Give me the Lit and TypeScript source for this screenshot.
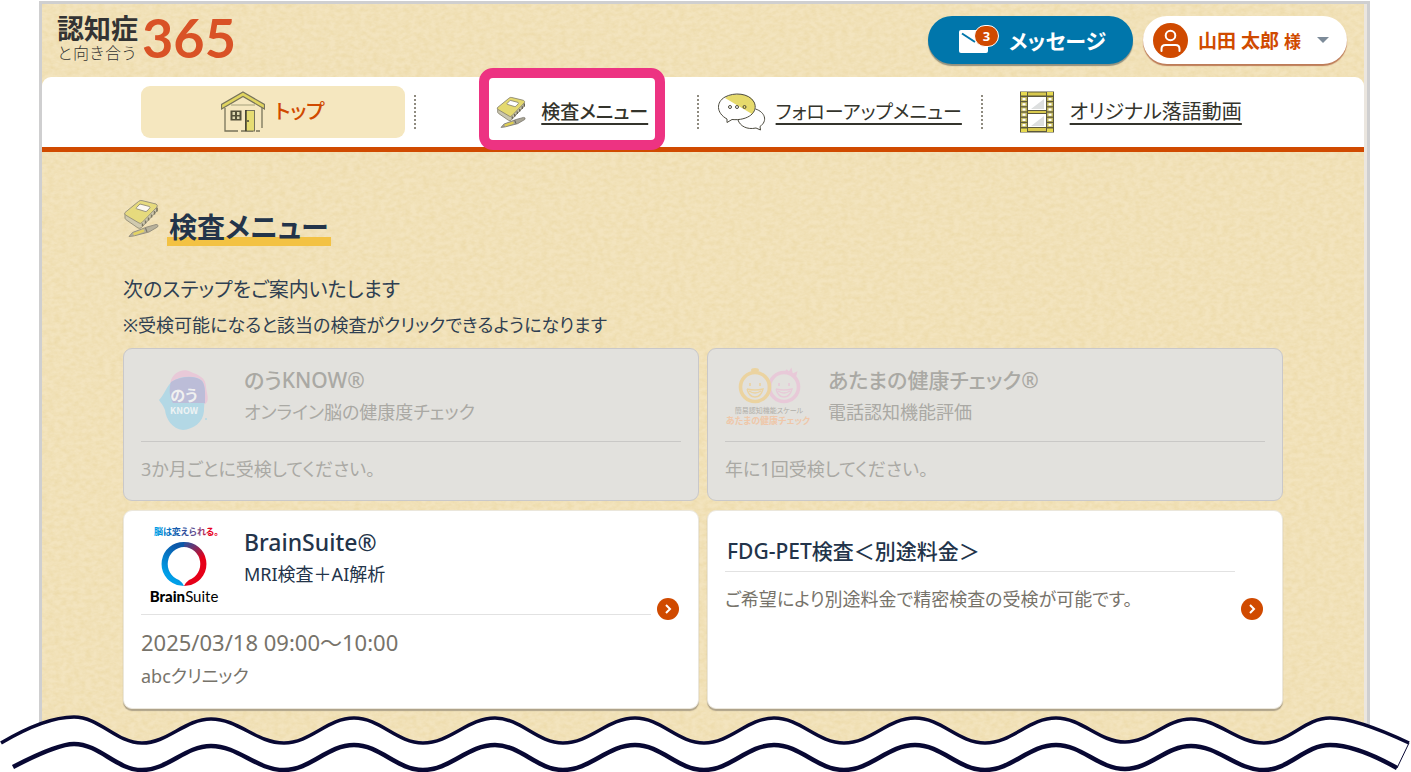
import { LitElement, html, css, svg, nothing, TemplateResult } from "lit";
import { customElement, property } from "lit/decorators.js";

const notebookIcon = html`<svg class="notebook" viewBox="0 0 36 38" aria-hidden="true">
  <path d="M2 14V19Q2 20 3 20.700L15 29Q17 30 18.500 28.500L34 12V8Z" fill="#c9c5ae" stroke="#85816e" stroke-width="1" />
  <path d="M15.500 2.500Q17 1 19 1.600L33 5Q35 6 34 8L19 23.500Q17.500 25 16 24L2.500 16Q1 15 2 13.500Z" fill="#e4d96f" stroke="#85816e" stroke-width="1" />
  <path d="M19.500 24.500V27M22.500 21.500V24.500M25.500 18.500V21.500M28.500 15.500V18.500M31.500 12V15.500M34 9V12.500" stroke="#5f5c4e" stroke-width="1.500" />
  <path d="M17 5 26.500 7.500Q27.500 8 26.800 9L24 12Q23.200 12.800 22 12.400L13.500 9.800Q12.800 9.400 13.500 8.600Z" fill="#fff" stroke="#85816e" stroke-width="1" />
  <path d="M6 37.500 9.500 33.500 24 28 33 25.500Q36 25.500 34.500 28L26 33 10.500 37Z" fill="#a9a595" stroke="#77746a" stroke-width="0.900" />
  <path d="M10.500 35.300 21 31.500" stroke="#e0cf4e" stroke-width="2.600" />
  <path d="M22.500 29 24 33" stroke="#5f5d55" stroke-width="1.100" />
</svg>`;

const houseIcon = html`<svg width="44" height="42" viewBox="0 0 44 42" aria-hidden="true">
  <path d="M4 17V40H17M20 40H32M35 40H39M41 16V37" fill="none" stroke="#77735a" stroke-width="1.300" />
  <path d="M10 14H34" stroke="#a49f7b" stroke-width="1" />
  <path d="M22 1 43.500 13.500V18L22 5.500 0.500 18V13.500Z" fill="#e0d45f" stroke="#77735a" stroke-width="1.200" />
  <rect x="9.500" y="19.500" width="11" height="10" fill="#54513a" />
  <path d="M11.500 21h2.500v3h-2.500zM16 21h2.500v3h-2.500zM11.500 25.500h2.500v2.500h-2.500zM16 25.500h2.500v2.500h-2.500z" fill="#ddd8b0" />
  <rect x="24.500" y="19.500" width="9" height="20.500" fill="#e6dc72" stroke="#77735a" stroke-width="1" />
  <path d="M25 19V40" stroke="#333124" stroke-width="1.300" /><circle cx="27" cy="30" r="1.100" fill="#54513a" />
</svg>`;

const chatIcon = html`<svg width="48" height="38" viewBox="0 0 48 38" aria-hidden="true">
  <path d="M7 5C13 0 28 0 34 6 39 11 37 18 34 21Z" fill="#e6da6c" />
  <path d="M9 26C-2 20-2 9 7 4 16-1 31 0 36 9 41 19 30 28 14 26.500L9 29.500Z" fill="none" stroke="#4c4a3e" stroke-width="1" />
  <path d="M37.500 16C47 19 50 28 42 33.500L42.500 37 38 35C29 37 22 33 20 27" fill="none" stroke="#4c4a3e" stroke-width="1" />
  <g fill="none" stroke="#4c4a3e" stroke-width="1"><circle cx="12" cy="14" r="1.500" /><circle cx="19" cy="14" r="1.500" /><circle cx="26.500" cy="14" r="1.500" /></g>
</svg>`;

const filmIcon = html`<svg width="36" height="42" viewBox="0 0 36 42" aria-hidden="true">
  <rect x="1" y="0.500" width="34" height="41" fill="#5c583d" />
  <path d="M9 1.500H27V4.500H9zM9 37H27V40H9zM9 20H27V22H9z" fill="#d8c94f" />
  <rect x="9" y="6" width="18" height="13" fill="#fff" /><rect x="9" y="23" width="18" height="13" fill="#fff" />
  <path d="M12 18 25 8V18zM12 35 25 25V35z" fill="#dddfdf" />
  <rect x="2" y="1" width="6" height="3.500" fill="#e6d94f" /><rect x="28" y="1" width="6" height="3.500" fill="#e6d94f" />
  <rect x="2" y="37.500" width="6" height="3.500" fill="#e6d94f" /><rect x="28" y="37.500" width="6" height="3.500" fill="#e6d94f" />
  ${[6, 11.2, 16.4, 21.6, 26.8, 32].map(
    (y) => svg`<rect x="2" y=${y} width="6" height="4" fill="#c4b85a" /><rect x="28" y=${y} width="6" height="4" fill="#c4b85a" />
      <rect x="3.5" y=${y + 1} width="3" height="2.200" fill="#fff" /><rect x="29.5" y=${y + 1} width="3" height="2.200" fill="#fff" />`
  )}
</svg>`;

const knowLogo = html`<svg width="86" height="66" viewBox="0 0 86 66" role="img" aria-label="のうKNOW">
  <path d="M30 13C34 4 43 1 50 5 58 8 65 11 65 20 66 28 69 34 64 37H32C28 30 28 20 30 13Z" fill="#e8c9d8" />
  <path d="M32 14C40 9 55 8 61 14 66 20 63 38 63 44 62 56 52 62 42 63 31 62 25 52 24 43 22 38 20 36 18 33 24 27 25 19 32 14Z" fill="#b3d8e5" />
  <path d="M30 15C40 9 55 8 61 14 65 20 64 28 64 36H32C28 30 28 20 30 15Z" fill="#bcbdd8" />
  <text class="lg bold" x="43" y="34" font-size="15" fill="#f0f0f0" text-anchor="middle">のう</text>
  <text class="lg bold" x="43" y="47" font-size="9" fill="#eef3f4" text-anchor="middle">KNOW</text>
  <circle cx="65" cy="52" r="1" fill="#b3d8e5" />
</svg>`;

const face = (x: number, color: string) => svg`<g fill="none" stroke=${color}>
  <circle cx=${x} cy="20" r="14.5" stroke-width="3.600" />
  <path d="M${x - 8} 22Q${x} 24 ${x + 8} 22Q${x + 6} 30 ${x} 30Q${x - 6} 30 ${x - 8} 22M${x - 6} 24Q${x} 28 ${x + 6} 24" stroke-width="1.300" />
  <path d="M${x - 5} 16V19M${x + 5} 16V19" stroke-width="1.600" />
</g>`;

const checkLogo = html`<svg width="86" height="66" viewBox="0 0 86 66" role="img" aria-label="あたまの健康チェック">
  ${face(59, "#e8c9d8")}${face(30, "#ebd3a0")}
  <ellipse cx="30" cy="3" rx="4" ry="2" fill="#ebd3a0" />
  <path d="M61 3l3 3 2-3 1 5 4-2-1 4" stroke="#e8c9d8" stroke-width="2" fill="none" />
  <text class="lg" x="44" y="46" font-size="7" fill="#b0aea8" text-anchor="middle">簡易認知機能スケール</text>
  <text class="lg bold" x="43" y="57" font-size="9" fill="#efc7a9" text-anchor="middle">あたまの健康チェック</text>
</svg>`;

const brainLogo = html`<svg width="86" height="86" viewBox="0 0 86 86" role="img" aria-label="BrainSuite">
  <defs>
    <linearGradient id="tag" x1="0" x2="1"><stop offset="0" stop-color="#00a0e9" /><stop offset="0.400" stop-color="#1a4fa3" /><stop offset="0.700" stop-color="#7a4a85" /><stop offset="0.850" stop-color="#e60020" /></linearGradient>
    <linearGradient id="ringL" x1="0.300" y1="1" x2="0.700" y2="0"><stop offset="0.200" stop-color="#009fe8" /><stop offset="0.900" stop-color="#0b57a8" /></linearGradient>
    <linearGradient id="ringR" x1="0" y1="0" x2="0.400" y2="1"><stop offset="0" stop-color="#1957a8" /><stop offset="0.600" stop-color="#e60018" /></linearGradient>
  </defs>
  <text class="lg bold" x="13" y="12" font-size="9" fill="url(#tag)">脳は変えられる。</text>
  <path d="M43 19A22 22 0 0 0 36 62L43 63Q42 60 38 57A17 17 0 0 1 43 24Z" fill="url(#ringL)" />
  <path d="M43 19A22 22 0 0 1 50 62L43 63Q44 60 48 57A17 17 0 0 0 43 24Z" fill="url(#ringR)" />
  <text class="lato" x="43" y="79" font-size="15" fill="#000" text-anchor="middle"><tspan class="black">Brain</tspan>Suite</text>
</svg>`;

@customElement("test-card")
class TestCard extends LitElement {
  @property() heading = "";
  @property() sub = "";
  @property({ attribute: false }) lines: string[] = [];
  @property({ attribute: false }) logo: TemplateResult | null = null;
  @property({ type: Boolean }) active = false;

  static styles = css`
    :host { display: grid; }
    .card { box-sizing: border-box; display: flex; align-items: center; gap: 6px; padding: 18px 17px 13px; border: 1px solid #c9c8ca; border-radius: 9px; background: #e2e1dd; color: #aaa9a4; text-decoration: none; }
    .card.active { padding: 12px 19px 13px 17px; border-color: #ebe7dc; background: #fff; color: #23344a; box-shadow: 0 2px 1px #afa38a; }
    .content { flex: 1; align-self: stretch; min-width: 0; display: flex; flex-direction: column; }
    .head { display: flex; gap: 17px; min-height: 74px; border-bottom: 1px solid #c9c8c6; }
    .active .head { min-height: 91px; border-color: #e2e2e2; }
    .active .head.plain { min-height: 48px; }
    .head svg { flex: none; }
    h2 { margin: 0; font-size: 21px; line-height: 26px; font-weight: 500; }
    .active h2 { font-size: 23px; line-height: 38px; }
    .active .plain h2 { font-size: 21px; line-height: 56px; padding: 0 2px; }
    .active .head.plain { height: 48px; }
    .sub { margin: 0; font-size: 18px; line-height: 38px; }
    .active .sub { line-height: 26px; }
    .body { padding-top: 10px; font-size: 18px; line-height: 35px; }
    .active .body { color: #77736a; }
    .body p { margin: 0; }
    .body p.date { font-size: 22px; line-height: 34px; }
    .arrow { flex: none; width: 22px; height: 22px; }
    .lg { font-family: "Noto Sans CJK JP", sans-serif; }
    .bold { font-weight: 700; }
    .lato { font-family: Lato, sans-serif; }
    .black { font-weight: 900; }
  `;

  render() {
    const content = html`<div class="content">
      <div class="head ${this.logo ? "" : "plain"}">
        ${this.logo ?? nothing}
        <div><h2>${this.heading}</h2>${this.sub ? html`<p class="sub">${this.sub}</p>` : nothing}</div>
      </div>
      <div class="body">${this.lines.map((l) => html`<p class=${/^\d{4}\//.test(l) ? "date" : ""}>${l}</p>`)}</div>
    </div>`;
    return this.active
      ? html`<a class="card active" href="#">${content}
          <svg class="arrow" viewBox="0 0 22 22" aria-hidden="true"><circle cx="11" cy="11" r="11" fill="#d04a00" /><path d="M9 7 13 11 9 15" fill="none" stroke="#fff" stroke-width="2" /></svg>
        </a>`
      : html`<article class="card" aria-disabled="true">${content}</article>`;
  }
}

/* Crest and trough positions of the torn edge. */
const crests: [number, number][] = [
  [74, 4], [142, 30], [211, 6], [284, 30], [354, 5], [423, 30], [495, 5], [563, 30], [635, 5], [704, 30],
  [774, 5], [844, 30], [915, 5], [985, 30], [1056, 5], [1125, 29], [1191, 6], [1264, 30], [1330, 5],
];
const wave = (dy: number, start: [number, number], end: [number, number]) => {
  let px = 74;
  let py = crests[0][1] + dy;
  let d = `M${start[0]} ${start[1]}Q${start[0] + 44} ${py} 74 ${py}`;
  for (const [x, y0] of crests.slice(1)) {
    const y = y0 + dy;
    const k = (x - px) * 0.38;
    d += `C${px + k} ${py} ${x - k} ${y} ${x} ${y}`;
    px = x;
    py = y;
  }
  return `${d}Q${px + 26} ${py} ${end[0]} ${end[1]}`;
};

@customElement("app-root")
class AppRoot extends LitElement {
  static styles = css`
    :host { display: block; position: relative; box-sizing: border-box; min-height: 100vh; padding: 1px 41px 30px 39px; overflow: hidden; background: #fff; font-family: "Noto Sans", "Noto Sans CJK JP", sans-serif; font-feature-settings: "palt"; color: #34342c; }
    .frame { position: relative; border: 3px solid #cfcfd0; border-bottom: 0; background: #ebe6df; padding-right: 3px; }
    .sheet { position: relative; background: #f3e4be; }
    .paper { position: absolute; inset: 0; width: 100%; height: 100%; }
    header { position: relative; display: flex; justify-content: space-between; align-items: flex-start; height: 73px; padding: 0 17px 0 15px; }
    .brand { display: flex; gap: 4px; padding-top: 9px; text-decoration: none; color: #333; }
    .brand-jp { display: flex; flex-direction: column; }
    .brand-main { font-size: 27px; line-height: 31px; font-weight: 700; }
    .brand-sub { font-size: 16px; line-height: 18px; font-weight: 300; font-feature-settings: normal; }
    .brand-num { font-family: Lato, sans-serif; font-size: 54px; line-height: 50px; font-weight: 700; color: #d95226; }
    .actions { display: flex; gap: 10px; padding-top: 12px; }
    button { display: flex; align-items: center; box-sizing: border-box; height: 48px; border: 0; border-radius: 24px; font-family: inherit; font-feature-settings: inherit; font-size: 20px; font-weight: 700; cursor: pointer; }
    .msg { gap: 9px; width: 205px; padding: 0 27px 0 30px; background: #0076ab; color: #fff; font-size: 21px; box-shadow: 0 2px 1px #92917f; }
    .user { gap: 10px; width: 204px; padding: 0 18px 0 10px; background: #fff; color: #d04a00; font-size: 19px; box-shadow: 0 2px 1px #bd7c58; }
    .user small { font-size: 17px; }
    .user .caret { margin-left: auto; }
    nav { position: relative; box-sizing: border-box; height: 75px; display: grid; grid-template-columns: repeat(4, 1fr); align-items: center; padding: 0 98px 0 90px; background: #fff; border-bottom: 5px solid #d04a00; border-radius: 9px 9px 0 0; }
    .cell { display: flex; justify-content: center; align-items: center; height: 34px; border-right: 2px dotted #8f8b80; }
    .cell:last-child { padding-left: 12px; border-right: 0; }
    nav a { display: flex; align-items: center; gap: 10px; color: inherit; font-size: 19px; line-height: 26px; text-decoration: underline; text-underline-offset: 4px; text-decoration-thickness: 2px; }
    nav a.film { gap: 15px; font-size: 20px; }
    nav a.current { flex: 1; justify-content: center; height: 52px; margin: 0 9px; border-radius: 9px; background: #f5e7bf; color: #d04a00; font-size: 20px; font-weight: 500; text-decoration: none; }
    .cell.marked { padding-left: 32px; }
    .marked a { position: relative; gap: 15px; padding: 0 7px; font-weight: 500; }
    .marked a::after { content: ""; position: absolute; inset: -27px -10px -21px; border: 10px solid #ed3382; border-radius: 14px; }
    .notebook { width: 30px; height: 34px; }
    main { position: relative; padding: 45px 81px 32px; }
    .title { display: flex; align-items: flex-start; gap: 8px; height: 50px; }
    .title .notebook { width: 36px; height: 40px; margin-top: 1px; opacity: 0.8; }
    h1 { margin: 12px 0 0; padding: 0 2px; font-size: 28px; line-height: 37px; font-weight: 700; color: #23344a; background: linear-gradient(transparent 28px, #f3c243 28px); }
    .lead { margin: 28px 0 0; font-size: 20px; line-height: 30px; color: #2f3f52; }
    .note { margin: 5px 0 8px; font-size: 18px; line-height: 30px; color: #2f3f52; }
    .cards { display: grid; grid-template-columns: 1fr 1fr; grid-template-rows: 153px 199px; gap: 9px 8px; }
    .wave { position: absolute; left: 0; bottom: 0; width: 100%; height: 59px; }
  `;

  render() {
    return html`
      <div class="frame"><div class="sheet">
        <svg class="paper" aria-hidden="true">
          <filter id="grain" x="0" y="0" width="100%" height="100%" color-interpolation-filters="sRGB">
            <feTurbulence type="fractalNoise" baseFrequency="0.16 0.24" numOctaves="3" seed="4" />
            <feColorMatrix values="0 0 0 0 0.910  0 0 0 0 0.830  0 0 0 0 0.610  0.900 0 0 0 -0.260" />
          </filter>
          <rect width="100%" height="100%" filter="url(#grain)" />
        </svg>
        <header>
          <a class="brand" href="#">
            <span class="brand-jp"><span class="brand-main">認知症</span><span class="brand-sub">と向き合う</span></span>
            <span class="brand-num">365</span>
          </a>
          <div class="actions">
            <button class="msg" type="button">
              <svg width="42" height="30" viewBox="0 0 42 30" aria-hidden="true">
                <rect x="1" y="5" width="29" height="23" rx="2" fill="#fff" /><path d="M4 8.500 17 17" stroke="#0076ab" stroke-width="2" />
                <rect x="16.500" y="0.500" width="24" height="21" rx="10.500" fill="#d04a00" stroke="#fff" stroke-width="1" />
                <text x="28.500" y="16" font-size="13" font-weight="700" fill="#fff" text-anchor="middle">3</text>
              </svg>メッセージ
            </button>
            <button class="user" type="button" aria-haspopup="menu">
              <svg width="35" height="35" viewBox="0 0 35 35" aria-hidden="true"><circle cx="17.500" cy="17.500" r="17.500" fill="#d04a00" /><g fill="none" stroke="#fff" stroke-width="2" stroke-linecap="round"><circle cx="17.500" cy="12.500" r="4.800" /><path d="M8.500 28V26Q8.500 22 12.500 22H22.500Q26.500 22 26.500 26V28" /></g></svg>
              <span>山田 太郎 <small>様</small></span>
              <svg class="caret" width="12" height="6" viewBox="0 0 12 6" aria-hidden="true"><path d="M0 0H12L6 6Z" fill="#7d8b99" /></svg>
            </button>
          </div>
        </header>
        <nav>
          <div class="cell"><a class="current" href="#">${houseIcon}トップ</a></div>
          <div class="cell marked"><a href="#">${notebookIcon}検査メニュー</a></div>
          <div class="cell"><a href="#">${chatIcon}フォローアップメニュー</a></div>
          <div class="cell"><a class="film" href="#">${filmIcon}オリジナル落語動画</a></div>
        </nav>
        <main>
          <div class="title">${notebookIcon}<h1>検査メニュー</h1></div>
          <p class="lead">次のステップをご案内いたします</p>
          <p class="note">※受検可能になると該当の検査がクリックできるようになります</p>
          <div class="cards">
            <test-card heading="のうKNOW®" sub="オンライン脳の健康度チェック" .logo=${knowLogo} .lines=${["3か月ごとに受検してください。"]}></test-card>
            <test-card heading="あたまの健康チェック®" sub="電話認知機能評価" .logo=${checkLogo} .lines=${["年に1回受検してください。"]}></test-card>
            <test-card active heading="BrainSuite®" sub="MRI検査＋AI解析" .logo=${brainLogo} .lines=${["2025/03/18 09:00～10:00", "abcクリニック"]}></test-card>
            <test-card active heading="FDG-PET検査＜別途料金＞" .lines=${["ご希望により別途料金で精密検査の受検が可能です。"]}></test-card>
          </div>
        </main>
      </div></div>
      <svg class="wave" viewBox="0 0 1411 59" preserveAspectRatio="none" aria-hidden="true">
        <path d="${wave(0, [1, 30], [1409, 30])}V59H0Z" fill="#fff" />
        <path d=${wave(0, [1, 30], [1409, 30])} fill="none" stroke="#080833" stroke-width="3.500" />
        <path d=${wave(27, [13, 54], [1397, 55])} fill="none" stroke="#080833" stroke-width="4.500" />
        <path d="M1409 30 1397 55" stroke="#080833" stroke-width="1" />
      </svg>
    `;
  }
}
